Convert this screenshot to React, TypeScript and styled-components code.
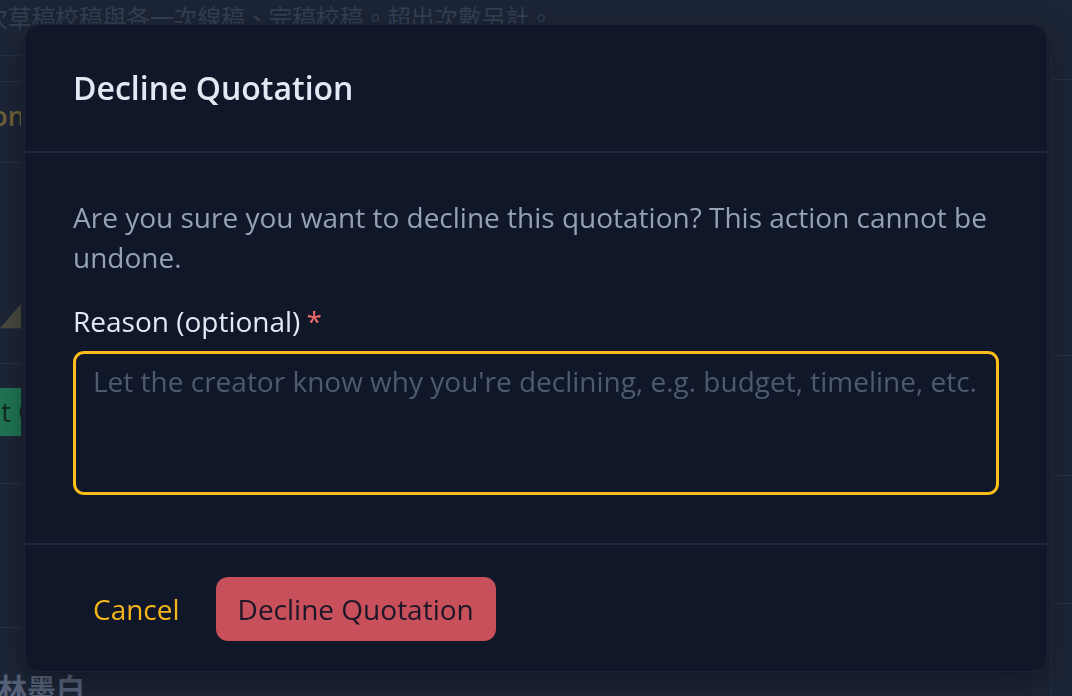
import React from "react";
import styled, { createGlobalStyle } from "styled-components";

const GlobalStyle = createGlobalStyle`
  html, body { margin: 0; padding: 0; height: 100%; background: #1c2537; }
  body { font-family: "Open Sans", "Noto Sans", sans-serif; overflow: hidden; }
  #root { height: 100%; }
  * { box-sizing: border-box; }
`;

/* ---------- background page (dimmed, behind the dialog) ---------- */

const BgPage = styled.div`
  height: 696px;
  width: 1072px;
  overflow: hidden;
  background: #1c2537;
  display: flex;
  flex-direction: column;
`;

const TopNote = styled.div`
  height: 34px;
  margin-left: -16px;
  padding-top: 1px;
  font-family: "Noto Sans CJK TC", "Noto Sans CJK SC", sans-serif;
  font-size: 24px;
  line-height: 32px;
  letter-spacing: -0.3px;
  color: #343f52;
  white-space: nowrap;
`;

const BgColumns = styled.div`
  flex: 1;
  display: flex;
  justify-content: space-between;
`;

const LeftStrip = styled.div`
  width: 21px;
  display: flex;
  flex-direction: column;
`;

const RightRail = styled.div`
  width: 21px;
  margin-top: 22px;
  border-left: 1px solid #263044;
  display: flex;
  flex-direction: column;
`;

const BgRow = styled.div<{ $h: number; $line?: boolean }>`
  height: ${(p) => p.$h}px;
  flex-shrink: 0;
  border-bottom: ${(p) => (p.$line ? "1px solid #263044" : "none")};
  display: flex;
  align-items: center;
  justify-content: flex-end;
  overflow: hidden;
`;

const AmberGhost = styled.span`
  font-size: 27px;
  font-weight: 600;
  color: #6e6238;
  white-space: nowrap;
  margin-right: -4px;
  margin-top: -14px;
`;

const GreenGhostButton = styled.div`
  height: 48px;
  width: 60px;
  margin-right: -2px;
  margin-top: -24px;
  background: #1f7553;
  color: #0f2a22;
  font-size: 27px;
  display: flex;
  align-items: center;
  justify-content: flex-end;
  white-space: nowrap;
  overflow: hidden;
`;

const GhostLabel = styled.span`
  margin-right: -12px;
`;

const NameGhost = styled.div`
  font-family: "Noto Sans CJK TC", sans-serif;
  font-size: 29px;
  font-weight: 700;
  color: #56617a;
  white-space: nowrap;
  margin-left: -2px;
  margin-bottom: -6px;
  line-height: 30px;
`;

const NameRow = styled.div`
  flex: 1;
  display: flex;
  align-items: flex-end;
`;

/* ---------- dialog ---------- */

const Overlay = styled.div`
  position: fixed;
  inset: 0;
  display: flex;
  align-items: center;
  justify-content: center;
`;

const Dialog = styled.div`
  width: 1024px;
  background: #0f1729;
  border: 1px solid #1b2436;
  border-radius: 16px;
  box-shadow: 0 10px 30px rgba(0, 0, 0, 0.35);
  display: flex;
  flex-direction: column;
  overflow: hidden;
`;

const Header = styled.div`
  height: 128px;
  padding: 0 48px;
  display: flex;
  align-items: center;
  border-bottom: 2px solid #1e283a;
`;

const Title = styled.h2`
  margin: 0;
  font-size: 32px;
  font-weight: 600;
  color: #e3e9f2;
  line-height: 40px;
`;

const Body = styled.div`
  padding: 44px 48px 48px;
  display: flex;
  flex-direction: column;
  border-bottom: 2px solid #1e283a;
`;

const Message = styled.p`
  margin: 0 0 24px;
  font-size: 28px;
  line-height: 40px;
  color: #94a1b6;
`;

const Label = styled.label`
  display: block;
  font-size: 28px;
  font-weight: 500;
  line-height: 40px;
  color: #e3e9f2;
  margin-bottom: 10px;
`;

const Required = styled.span`
  color: #f16a6a;
  margin-left: 6px;
`;

const ReasonInput = styled.textarea`
  display: block;
  width: 100%;
  height: 144px;
  padding: 7px 17px;
  border: 3px solid #fbbc1c;
  border-radius: 11px;
  background: #0f1729;
  color: #e3e9f2;
  font-family: "Open Sans", sans-serif;
  font-size: 28px;
  line-height: 40px;
  resize: none;
  outline: none;
  &::placeholder {
    color: #4d5a70;
  }
`;

const Footer = styled.div`
  padding: 32px 48px 30px;
  display: flex;
  align-items: center;
  gap: 16px;
`;

const Button = styled.button<{ $variant: "ghost" | "danger" }>`
  height: 64px;
  padding: 0 ${(p) => (p.$variant === "danger" ? 22 : 20)}px;
  border: none;
  border-radius: 12px;
  font-family: "Open Sans", sans-serif;
  font-size: 28px;
  font-weight: 400;
  cursor: pointer;
  background: ${(p) => (p.$variant === "danger" ? "#c7505a" : "transparent")};
  color: ${(p) => (p.$variant === "danger" ? "#1c1628" : "#f5b51a")};
`;

export default function App() {
  return (
    <>
      <GlobalStyle />
      <BgPage>
        <TopNote>次草稿校稿與各一次線稿、完稿校稿。超出次數另計。</TopNote>
        <BgColumns>
          <LeftStrip>
            <BgRow $h={22} $line />
            <BgRow $h={26} $line />
            <BgRow $h={81} $line>
              <AmberGhost>on</AmberGhost>
            </BgRow>
            <BgRow $h={166} $line>
              <svg width="21" height="166" viewBox="0 0 21 166" style={{ alignSelf: "flex-end" }}>
                <polygon points="21,142 21,166 0,166" fill="#47493f" />
              </svg>
            </BgRow>
            <BgRow $h={35} $line />
            <BgRow $h={120} $line>
              <GreenGhostButton>
                <GhostLabel>t C</GhostLabel>
              </GreenGhostButton>
            </BgRow>
            <BgRow $h={144} $line />
            <NameRow>
              <NameGhost>林墨白</NameGhost>
            </NameRow>
          </LeftStrip>
          <RightRail>
            <BgRow $h={24} $line />
            <BgRow $h={276} $line />
            <BgRow $h={120} $line />
            <BgRow $h={128} $line />
          </RightRail>
        </BgColumns>
      </BgPage>

      <Overlay>
        <Dialog role="dialog" aria-labelledby="decline-title">
          <Header>
            <Title id="decline-title">Decline Quotation</Title>
          </Header>
          <Body>
            <Message>
              Are you sure you want to decline this quotation? This action cannot be undone.
            </Message>
            <Label htmlFor="reason">
              Reason (optional)
              <Required>*</Required>
            </Label>
            <ReasonInput
              id="reason"
              placeholder="Let the creator know why you're declining, e.g. budget, timeline, etc."
            />
          </Body>
          <Footer>
            <Button $variant="ghost">Cancel</Button>
            <Button $variant="danger">Decline Quotation</Button>
          </Footer>
        </Dialog>
      </Overlay>
    </>
  );
}
